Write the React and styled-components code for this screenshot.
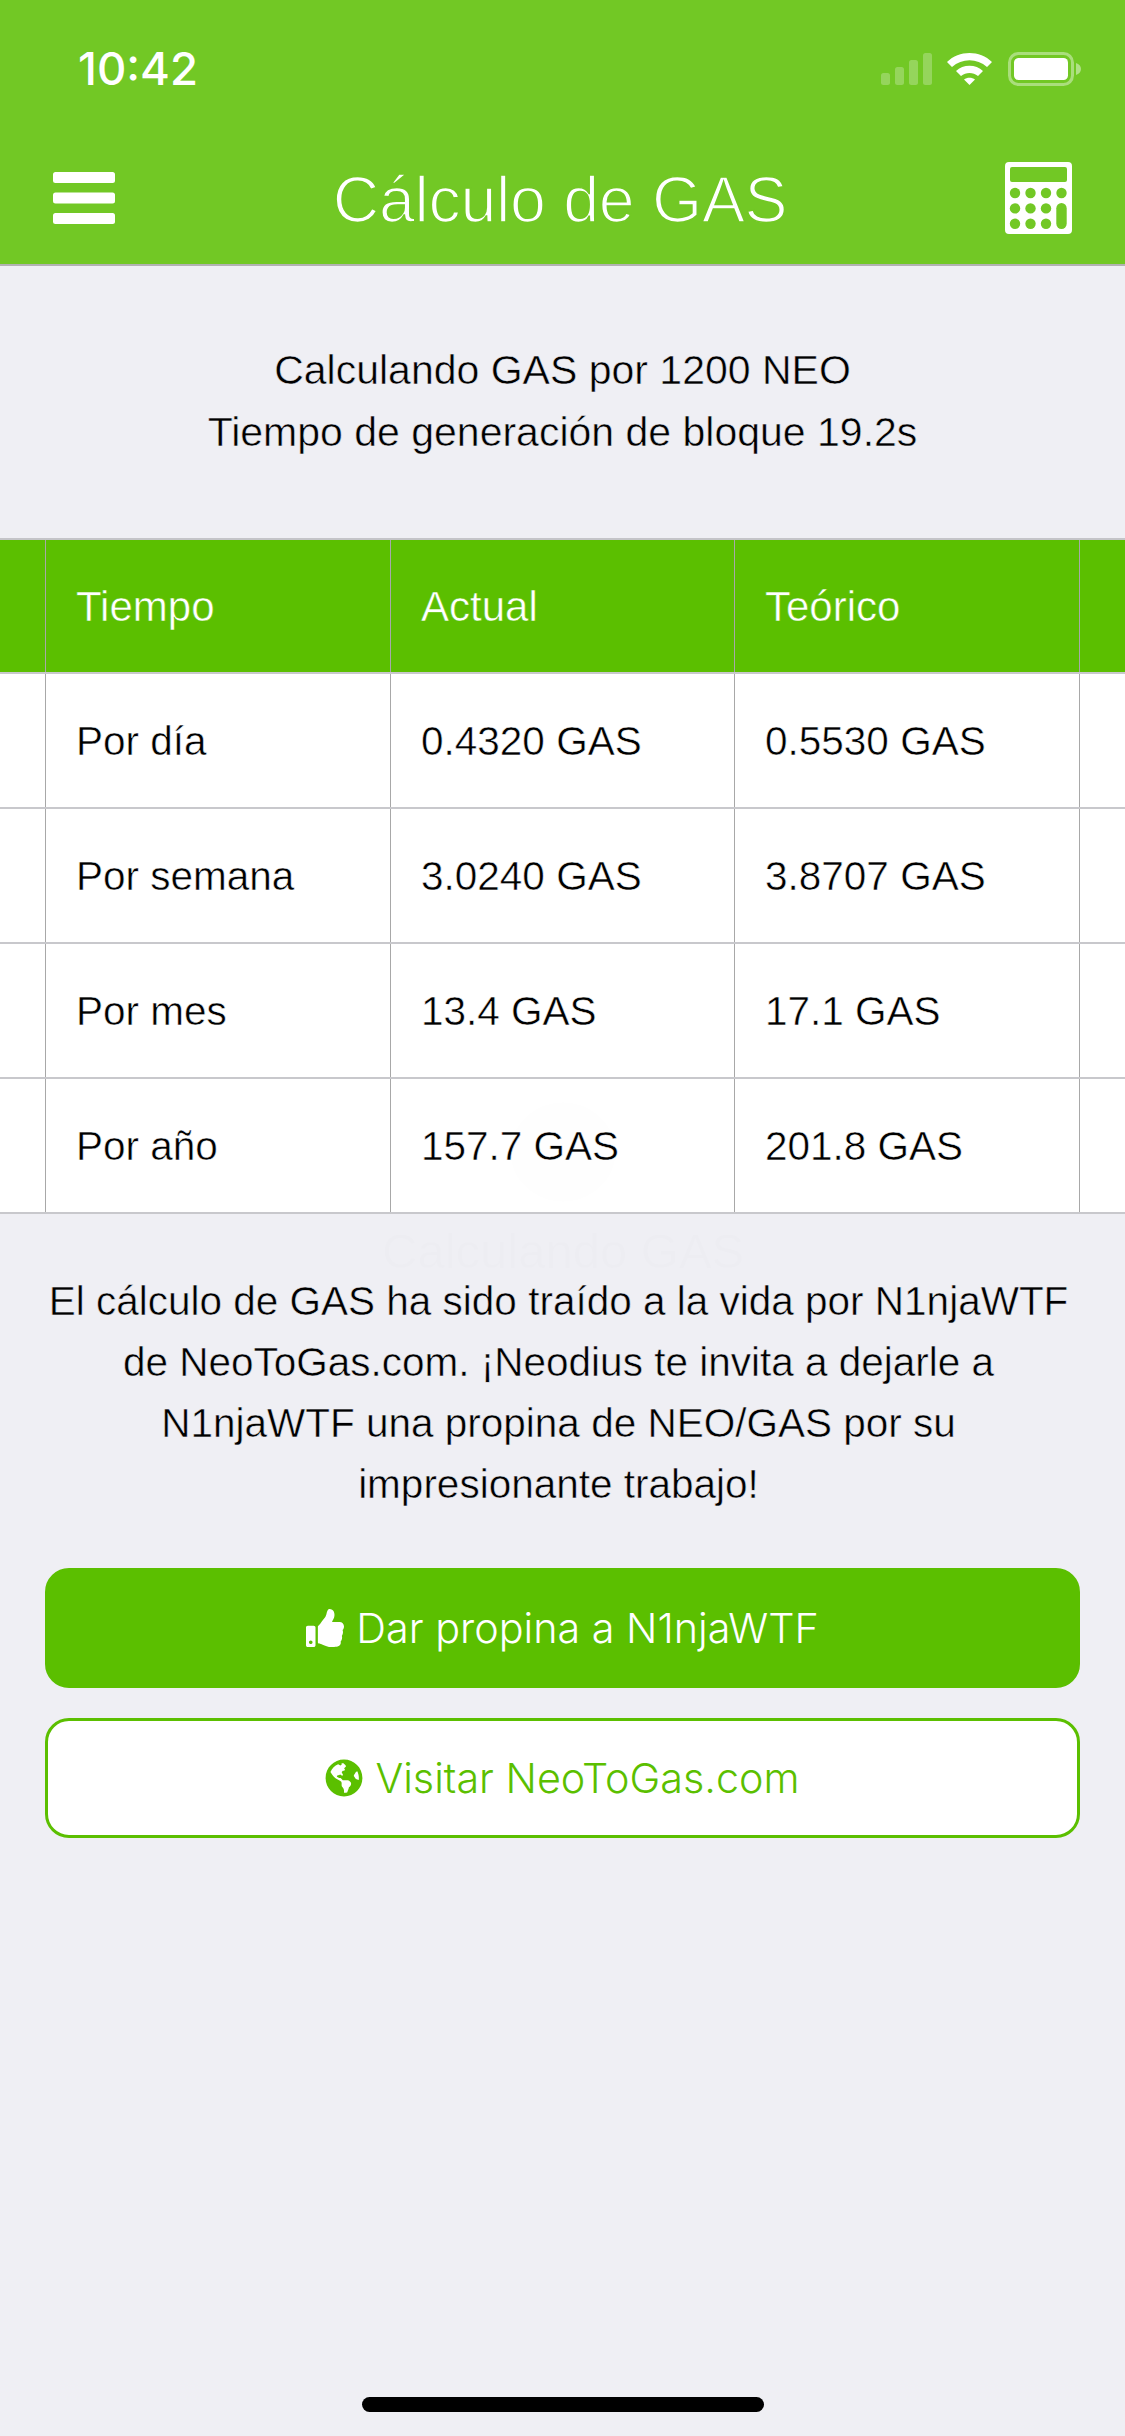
import React from "react";
import styled, { createGlobalStyle } from "styled-components";
import { FaThumbsUp, FaGlobeAmericas } from "react-icons/fa";

const Global = createGlobalStyle`
  html, body { margin: 0; padding: 0; background: #efeff4; }
  * { box-sizing: border-box; }
`;
const Screen = styled.div`
  position: relative; width: 1125px; height: 2436px; overflow: hidden;
  background: #efeff4; color: #000;
  font-family: "Liberation Sans", Arial, sans-serif; font-weight: 400;
`;
const Header = styled.header`
  height: 266px; background: #72c825; border-bottom: 2px solid #b2b2b2;
  display: flex; flex-direction: column; color: #fff;
`;
const StatusBar = styled.div`
  height: 132px; padding: 46px 44px 0 78px; display: flex; justify-content: space-between; align-items: flex-start;
  svg { margin-top: 6px; }
`;
const Clock = styled.span`
  font-family: Inter, sans-serif; font-size: 45.5px; font-weight: 500; line-height: 46px;
`;
const NavBar = styled.div`
  flex: 1; padding: 0 53px; display: flex; align-items: center; justify-content: space-between;
`;
const Title = styled.h1`
  margin: 0; font-size: 64.5px; font-weight: 400; line-height: 72px; letter-spacing: -0.3px; padding-top: 3px;
  -webkit-text-stroke: 1.7px #72c825;
`;
const Intro = styled.p`
  margin: 0; height: 272px; padding-top: 73px; text-align: center; font-size: 41px; line-height: 62px;
  -webkit-text-stroke: 0.5px #efeff4;
`;
const Table = styled.div`
  border-top: 2px solid #c4c4c8; display: flex; flex-direction: column;
`;
const Row = styled.div`
  display: grid; grid-template-columns: 46px 345px 344px 345px 1fr; height: ${p => p.$head ? "134px" : "135px"};
  background: ${p => p.$head ? "#5bbf00" : "#fff"}; color: ${p => p.$head ? "#fff" : "#000"};
  border-bottom: 2px solid #c8c8cc;
  -webkit-text-stroke: 0.5px ${p => p.$head ? "#5bbf00" : "#fff"};
  font-size: ${p => p.$head ? "42px" : "40.5px"};
`;
const Cell = styled.div`
  display: flex; align-items: center; padding: 2px 0 0 30px;
  border-right: 1px solid #a8a8a8;
  &:last-child { border-right: 0; }
`;
const Credit = styled.p`
  margin: 0; padding: 57px 52px 0 44px; height: 354px; text-align: center; font-size: 40.5px; line-height: 61px;
  -webkit-text-stroke: 0.5px #efeff4;
`;
const Actions = styled.div`
  padding: 0 45px; display: flex; flex-direction: column; gap: 30px;
`;
const Button = styled.button`
  height: 120px; border-radius: 24px; display: flex; align-items: center; justify-content: center; gap: 12px;
  font-family: Inter, sans-serif; font-size: 41.3px; font-weight: 300;
  background: ${p => p.$outline ? "#fff" : "#5bbf00"};
  color: ${p => p.$outline ? "#5bbf00" : "#fff"};
  border: 3px solid #5bbf00;
  svg { width: 38px; height: 38px; }
`;
const HomeBar = styled.div`
  position: absolute; left: 362px; bottom: 24px; width: 402px; height: 15px; border-radius: 8px; background: #000;
`;
const GhostSpinner = styled.div`
  position: absolute; left: 510px; top: 1102px; width: 106px; height: 100px; border-radius: 50%;
  background: rgba(0, 0, 0, 0.005); pointer-events: none;
`;
const GhostLabel = styled.div`
  position: absolute; left: 382px; top: 1232px; font-size: 49px; line-height: 38px; color: rgba(0, 0, 0, 0.009);
  pointer-events: none;
`;

const StatusIcons = () => (
  <svg width="203" height="34" viewBox="0 0 203 34" fill="none">
    <g fill="#fff" opacity=".25">
      <rect x="3" y="21" width="9" height="12" rx="2.5" />
      <rect x="17" y="15" width="9" height="18" rx="2.5" />
      <rect x="31" y="8" width="9" height="25" rx="2.5" />
      <rect x="45" y="1" width="9" height="32" rx="2.5" />
    </g>
    <g fill="#fff">
      <path d="M69 10 C 81 -2, 102 -2, 114 10 L 109 15 C 99 6, 84 6, 74 15 Z" />
      <path d="M78 19 C 85 12, 98 12, 105 19 L 100 24 C 95 20, 88 20, 83 24 Z" />
      <path d="M86 27.5 C 89 25, 94 25, 97 27.5 L 91.5 33 Z" />
    </g>
    <rect x="131.5" y="1.5" width="63" height="31" rx="9" stroke="#fff" strokeOpacity=".4" strokeWidth="3" />
    <rect x="136" y="6" width="54" height="22" rx="4.5" fill="#fff" />
    <path d="M198 11 C 201 12, 203 14, 203 17 C 203 20, 201 22, 198 23 Z" fill="#fff" opacity=".45" />
  </svg>
);

const Menu = () => (
  <svg width="62" height="52" viewBox="0 0 62 52" fill="#fff">
    <rect y="0" width="62" height="11" rx="2.5" />
    <rect y="20.5" width="62" height="11" rx="2.5" />
    <rect y="41" width="62" height="11" rx="2.5" />
  </svg>
);

const Calc = () => {
  const dots = [];
  [0, 1, 2].forEach(r => [0, 1, 2, 3].forEach(c => {
    if (c === 3 && r > 0) return;
    dots.push(<circle key={`${r}${c}`} cx={10 + c * 15.5} cy={31 + r * 15.4} r="5.2" />);
  }));
  return (
    <svg width="67" height="72" viewBox="0 0 67 72">
      <path fillRule="evenodd" fill="#fff" d="M4 0 H63 a4 4 0 0 1 4 4 V68 a4 4 0 0 1 -4 4 H4 a4 4 0 0 1 -4 -4 V4 a4 4 0 0 1 4 -4 Z M7 5 a2 2 0 0 0 -2 2 V18 a2 2 0 0 0 2 2 H60 a2 2 0 0 0 2 -2 V7 a2 2 0 0 0 -2 -2 Z" />
      <g fill="#72c825">
        {dots}
        <rect x="51.3" y="41" width="10.4" height="26" rx="5.2" />
      </g>
    </svg>
  );
};

const rows = [
  ["Tiempo", "Actual", "Teórico"],
  ["Por día", "0.4320 GAS", "0.5530 GAS"],
  ["Por semana", "3.0240 GAS", "3.8707 GAS"],
  ["Por mes", "13.4 GAS", "17.1 GAS"],
  ["Por año", "157.7 GAS", "201.8 GAS"],
];

export default function App() {
  return (
    <Screen>
      <Global />
      <Header>
        <StatusBar>
          <Clock>10:42</Clock>
          <StatusIcons />
        </StatusBar>
        <NavBar>
          <Menu />
          <Title>Cálculo de GAS</Title>
          <Calc />
        </NavBar>
      </Header>
      <Intro>
        Calculando GAS por 1200 NEO<br />
        Tiempo de generación de bloque 19.2s
      </Intro>
      <Table>
        {rows.map((r, i) => (
          <Row key={r[0]} $head={i === 0}>
            <Cell />
            {r.map(t => <Cell key={t}>{t}</Cell>)}
            <Cell />
          </Row>
        ))}
      </Table>
      <Credit>
        El cálculo de GAS ha sido traído a la vida por N1njaWTF de NeoToGas.com. ¡Neodius te invita a dejarle a N1njaWTF una propina de NEO/GAS por su impresionante trabajo!
      </Credit>
      <Actions>
        <Button><FaThumbsUp /> Dar propina a N1njaWTF</Button>
        <Button $outline><FaGlobeAmericas /> Visitar NeoToGas.com</Button>
      </Actions>
      <GhostSpinner />
      <GhostLabel>Calculando GAS</GhostLabel>
      <HomeBar />
    </Screen>
  );
}
